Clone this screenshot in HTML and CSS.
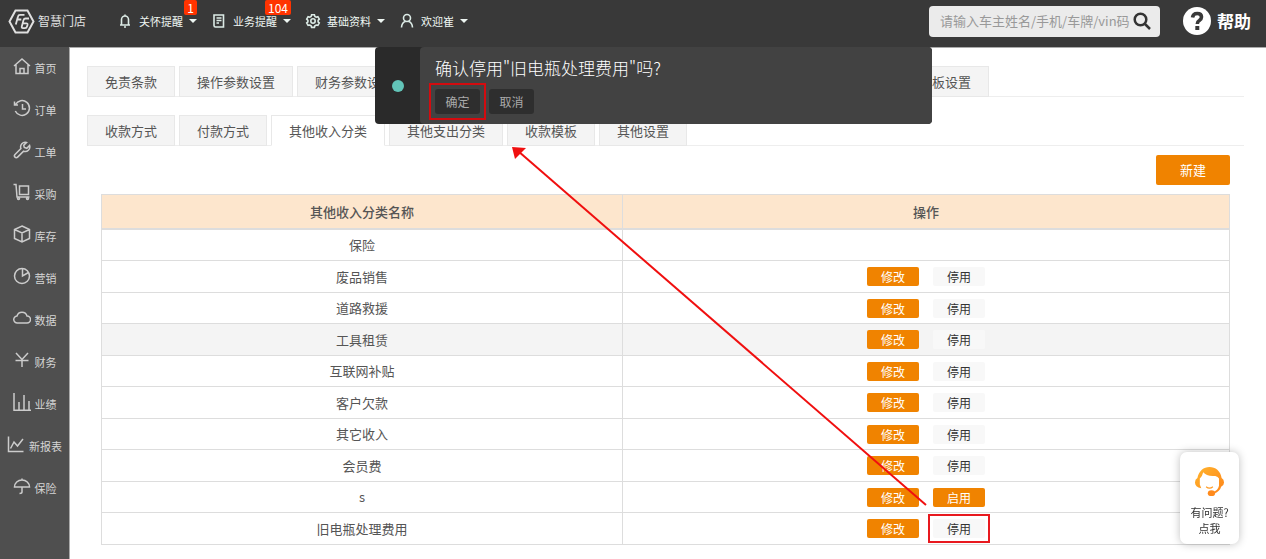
FILE: index.html
```html
<!DOCTYPE html>
<html lang="zh-CN">
<head>
<meta charset="utf-8">
<meta name="viewport" content="width=device-width, initial-scale=1">
<title>智慧门店</title>
<link rel="stylesheet" href="styles.css">
</head>
<body>
<div class="page">
  <header class="topbar">
    <a class="brand" href="#">
      <svg class="brand-mark" viewBox="0 0 27 25" aria-hidden="true"><path d="M7.500 1.500h12L25.500 12.500 19.500 23.500h-12L1.500 12.500z"/><path class="brand-letters" d="M7.800 15.500 10 7.500q.4-1.700 2-1.700h4.500M9.300 10.500h4M21 9.500h-3.500q-1.600 0-2 1.600l-1.700 6.300q-.4 1.700 1.200 1.700h2q1.600 0 2-1.600l.5-1.600q.4-1.600-1.200-1.600h-3.400"/></svg>
      <span>智慧门店</span>
    </a>
    <nav class="menus" aria-label="快捷菜单">
      <button class="menu" type="button">
        <svg class="menu-icon" viewBox="0 0 16 16" aria-hidden="true"><path d="M3 12h10M4.500 12V6.500a3.500 3.500 0 0 1 7 0V12M8 1.500V3M7 14h2"/></svg>
        <span>关怀提醒</span><i class="caret"></i><b class="badge">1</b>
      </button>
      <button class="menu" type="button">
        <svg class="menu-icon" viewBox="0 0 16 16" aria-hidden="true"><path d="M3 2h9.500v12H4.500Q3 14 3 12.500zM5.500 5h5M5.500 7.500h5M5.500 10h2.500M12.500 10v4"/></svg>
        <span>业务提醒</span><i class="caret"></i><b class="badge">104</b>
      </button>
      <button class="menu" type="button">
        <svg class="menu-icon" viewBox="0 0 16 16" aria-hidden="true"><path d="M6.600 1.800h2.800l.5 1.700 1.300.7 1.700-.5 1.400 2.400-1.200 1.300v1.400l1.200 1.200-1.400 2.400-1.700-.4-1.300.7-.5 1.700H6.600l-.5-1.700-1.300-.7-1.700.4L1.700 10l1.200-1.200V7.400L1.700 6.100l1.400-2.400 1.700.5 1.300-.7z"/><circle cx="8" cy="8" r="2.200"/></svg>
        <span>基础资料</span><i class="caret"></i>
      </button>
      <button class="menu" type="button">
        <svg class="menu-icon" viewBox="0 0 16 16" aria-hidden="true"><circle cx="8" cy="5" r="3.500"/><path d="M2.500 14.500c.2-3.500 1.800-5.500 4-6M13.500 14.500c-.2-3.500-1.800-5.500-4-6"/></svg>
        <span>欢迎崔</span><i class="caret"></i>
      </button>
    </nav>
    <form class="search" role="search">
      <input class="search-input" type="text" aria-label="搜索" placeholder="请输入车主姓名/手机/车牌/vin码">
      <button class="search-button" type="button" aria-label="搜索">
        <svg viewBox="0 0 18 18" aria-hidden="true"><circle cx="7.500" cy="7.500" r="5.800"/><path d="m12 12 5 5"/></svg>
      </button>
    </form>
    <a class="help" href="#">
      <svg viewBox="0 0 28 28" aria-hidden="true"><circle cx="14" cy="14" r="14" fill="#fff"/><path d="M9.500 10.500q.5-4 4.700-4 4.300 0 4.300 3.600 0 2-2.200 3.400-2 1.200-2 3.500" fill="none" stroke="#393939" stroke-width="3.600"/><path d="M12.300 19h4v4h-4z" fill="#393939"/></svg>
      <span>帮助</span>
    </a>
  </header>

  <div class="body">
    <nav class="sidebar" aria-label="主导航">
      <a class="side-link" href="#"><svg viewBox="0 0 18 18" aria-hidden="true"><path d="m1 9 8-7 8 7M3 7.500v9h12v-9M7 16.500v-5h4v5"/></svg><span>首页</span></a>
      <a class="side-link" href="#"><svg viewBox="0 0 18 18" aria-hidden="true"><path d="M2.500 5.500A7.400 7.400 0 1 1 2.300 12M1.500 2.500v3.500H5M9.500 5v5H13"/></svg><span>订单</span></a>
      <a class="side-link" href="#"><svg viewBox="0 0 18 18" aria-hidden="true"><path d="M13.500 1.500a4.600 4.600 0 0 0-5.600 6L2 13.500a1.800 1.800 0 0 0 2.600 2.600l6-5.900a4.600 4.600 0 0 0 6-5.700l-2.800 2.800-2.500-.8-.6-2.300z"/></svg><span>工单</span></a>
      <a class="side-link" href="#"><svg viewBox="0 0 18 18" aria-hidden="true"><path d="M.5 1.500H3L4 14h12.500M6.500 3h9v8.500h-9z"/><circle cx="5.500" cy="15.500" r="1"/><circle cx="14.500" cy="15.500" r="1"/></svg><span>采购</span></a>
      <a class="side-link" href="#"><svg viewBox="0 0 18 18" aria-hidden="true"><path d="m9 1 7.500 3.500v9L9 17l-7.500-3.500v-9zM1.500 4.500 9 8l7.500-3.500M9 8v9"/></svg><span>库存</span></a>
      <a class="side-link" href="#"><svg viewBox="0 0 18 18" aria-hidden="true"><circle cx="9" cy="9" r="7.500"/><path d="M9.500 1.500V9l6-3.500"/></svg><span>营销</span></a>
      <a class="side-link" href="#"><svg viewBox="0 0 18 18" aria-hidden="true"><path d="M4.500 14a3.500 3.500 0 0 1-.5-7 5.200 5.200 0 0 1 10 0 3.500 3.500 0 0 1 0 7z"/></svg><span>数据</span></a>
      <a class="side-link" href="#"><svg viewBox="0 0 18 18" aria-hidden="true"><path d="m3 2 6 6.500L15 2M2.500 9.500h13M9 8.500V16"/></svg><span>财务</span></a>
      <a class="side-link" href="#"><svg viewBox="0 0 18 18" aria-hidden="true"><path d="M1 0v17.200h17M6 17V9M11 17V2M16 17V8"/></svg><span>业绩</span></a>
      <a class="side-link" href="#"><svg viewBox="0 0 18 18" aria-hidden="true"><path d="M1.500 1.500v15h15M3.500 13.500 7 7l3.500 4 5.500-7"/></svg><span>新报表</span></a>
      <a class="side-link" href="#"><svg viewBox="0 0 18 18" aria-hidden="true"><path d="M1.500 10a7.500 7 0 0 1 15 0zM9 1.500V3M9 10v5q0 1.500-2.500 1.500"/></svg><span>保险</span></a>
    </nav>

    <main class="content">
      <nav class="tabs" aria-label="设置">
        <a class="tab" href="#">免责条款</a>
        <a class="tab" href="#">操作参数设置</a>
        <a class="tab" href="#">财务参数设置</a>
        <a class="tab tab-far" href="#">打印模板设置</a>
      </nav>
      <nav class="tabs" aria-label="财务参数">
        <a class="tab" href="#">收款方式</a>
        <a class="tab" href="#">付款方式</a>
        <a class="tab tab-active" href="#" aria-current="page">其他收入分类</a>
        <a class="tab" href="#">其他支出分类</a>
        <a class="tab" href="#">收款模板</a>
        <a class="tab" href="#">其他设置</a>
      </nav>
      <section class="panel">
        <button class="create" type="button">新建</button>
        <table class="grid">
          <thead><tr><th class="col-name" scope="col">其他收入分类名称</th><th scope="col">操作</th></tr></thead>
          <tbody>
            <tr><td>保险</td><td></td></tr>
            <tr><td>废品销售</td><td><div class="actions"><button class="act act-main" type="button">修改</button><button class="act" type="button">停用</button></div></td></tr>
            <tr><td>道路救援</td><td><div class="actions"><button class="act act-main" type="button">修改</button><button class="act" type="button">停用</button></div></td></tr>
            <tr class="row-hover"><td>工具租赁</td><td><div class="actions"><button class="act act-main" type="button">修改</button><button class="act" type="button">停用</button></div></td></tr>
            <tr><td>互联网补贴</td><td><div class="actions"><button class="act act-main" type="button">修改</button><button class="act" type="button">停用</button></div></td></tr>
            <tr><td>客户欠款</td><td><div class="actions"><button class="act act-main" type="button">修改</button><button class="act" type="button">停用</button></div></td></tr>
            <tr><td>其它收入</td><td><div class="actions"><button class="act act-main" type="button">修改</button><button class="act" type="button">停用</button></div></td></tr>
            <tr><td>会员费</td><td><div class="actions"><button class="act act-main" type="button">修改</button><button class="act" type="button">停用</button></div></td></tr>
            <tr><td>s</td><td><div class="actions"><button class="act act-main" type="button">修改</button><button class="act act-main" type="button">启用</button></div></td></tr>
            <tr><td>旧电瓶处理费用</td><td><div class="actions"><button class="act act-main" type="button">修改</button><button class="act act-marked" type="button">停用</button></div></td></tr>
          </tbody>
        </table>
      </section>
    </main>
  </div>

  <div class="confirm" role="dialog" aria-labelledby="confirm-title">
    <div class="confirm-side"><i class="dot"></i></div>
    <div class="confirm-main">
      <p class="confirm-title" id="confirm-title">确认停用"旧电瓶处理费用"吗?</p>
      <div class="confirm-actions">
        <button class="choice choice-marked" type="button">确定</button>
        <button class="choice" type="button">取消</button>
      </div>
    </div>
  </div>

  <svg class="pointer" width="420" height="364" viewBox="0 0 420 364" aria-hidden="true"><path d="M415 359 7 5" fill="none" stroke="#f00f0f" stroke-width="2"/><path d="m1 1 14 1L4 13z" fill="#f00f0f"/></svg>

  <button class="support" type="button">
    <svg viewBox="0 0 32 32" aria-hidden="true"><defs><linearGradient id="warm" x1="0" y1="0" x2="1" y2="1"><stop offset="0" stop-color="#ffb52e"/><stop offset="1" stop-color="#ff8418"/></linearGradient></defs><path d="M3.500 12.500C5 5 10 1 16 1s11.500 4 12.500 11.500Q31 14 31 17t-3 4.500q-1.200 5-7.500 7l-.8-1.300q5-2 6.100-6.700V13q-1-2-3.800-2.800Q13 11 9.500 6.500q-1 4.500-3.500 6.500v6l1.500 4Q1 21.500 1 17q0-3 2.500-4.500z" fill="url(#warm)"/><ellipse cx="18" cy="28" rx="3.800" ry="3" fill="#ff8a1c"/><path d="M12.500 21.500q3.500 2.800 7 0" fill="none" stroke="#ff9a22" stroke-width="1.200"/></svg>
    <span>有问题?</span><span>点我</span>
  </button>
</div>
</body>
</html>
```
FILE: styles.css
```css
* { box-sizing: border-box; }

body {
  margin: 0;
  background: #fff;
  color: #555;
  font-family: "Noto Sans CJK SC", "Noto Sans", sans-serif;
  font-size: 13px;
  line-height: 18px;
}

button, input { font: inherit; color: inherit; border: 0; padding: 0; background: none; }
a { color: inherit; text-decoration: none; }
p { margin: 0; }
svg { display: block; flex: none; }

.page { position: relative; display: flex; flex-direction: column; min-height: 100vh; }

/* Top bar */
.topbar {
  display: flex;
  align-items: center;
  height: 47px;
  padding: 0 15px 5px 8px;
  background: #393939;
  color: #fff;
}
.brand { display: flex; align-items: center; gap: 3px; font-size: 12px; color: #e0e0e0; }
.brand-mark { width: 27px; height: 25px; fill: none; stroke: #e0e0e0; stroke-width: 2; }
.brand-letters { stroke-width: 1.800; }
.menus { display: flex; gap: 14px; margin-left: 31px; }
.menu { position: relative; display: flex; align-items: center; gap: 6px; font-size: 11px; color: #eef6f2; white-space: nowrap; }
.menu-icon { width: 16px; height: 16px; fill: none; stroke: #dcebe6; stroke-width: 1.600; }
.caret { border: 4px solid transparent; border-top-color: #eef6f2; border-bottom: 0; }
.badge {
  position: absolute;
  right: 0;
  bottom: 15px;
  padding: 0 3px;
  min-width: 13px;
  border-radius: 2px;
  background: #ff3300;
  color: #fff;
  font-size: 12px;
  font-weight: 400;
  line-height: 15px;
}
.search { display: flex; align-items: center; width: 231px; height: 31px; margin-left: auto; padding: 0 9px 0 11px; border-radius: 4px; background: #ebebeb; }
.search-input { flex: 1; min-width: 0; outline: 0; color: #555; }
.search-input::placeholder { color: #999; opacity: 1; }
.search-button svg { width: 18px; height: 18px; fill: none; stroke: #333; stroke-width: 2.500; }
.help { display: flex; align-items: center; gap: 6px; margin-left: 23px; font-size: 17px; font-weight: 700; }
.help svg { width: 28px; height: 28px; }

/* Side navigation */
.body { display: flex; flex: 1; }
.sidebar { flex: none; width: 69px; background: #4f4f4f; color: #d5d5d5; }
.side-link { display: flex; align-items: center; justify-content: center; gap: 4px; height: 42px; font-size: 11px; white-space: nowrap; }
.side-link svg { width: 18px; height: 22px; padding-bottom: 4px; fill: none; stroke: #ccc; stroke-width: 1.500; }

/* Content */
.content { flex: 1; min-width: 0; padding: 18px 22px 14px 17px; border: solid #aaa; border-width: 1px 0 0 1px; }
.tabs { display: flex; gap: 4px; margin-bottom: 18px; border-bottom: 1px solid #eee; }
.tab { height: 31px; margin-bottom: -1px; padding: 0 17px; border: 1px solid #e8e8e8; background: #f4f4f4; line-height: 29px; white-space: nowrap; }
.tab-active { border-bottom-color: #fff; background: #fff; }
.tab-far { margin-left: 460px; }
.panel { display: flex; flex-direction: column; gap: 9px; margin-top: -9px; padding: 0 14px; }
.create { align-self: flex-end; width: 74px; height: 30px; border-radius: 2px; background: #f08300; color: #fff; }

.grid { width: 100%; border: solid #ddd; border-width: 1px 0 0 1px; border-spacing: 0; table-layout: fixed; text-align: center; }
.grid th, .grid td { padding: 0; border: solid #ddd; border-width: 0 1px 1px 0; }
.grid th { height: 35px; border-bottom-width: 2px; background: #fde6cd; font-weight: 500; }
.grid td { height: 31px; }
.grid tr:nth-child(even) td { height: 32px; }
.grid .col-name { width: 521px; }
.row-hover { background: #f4f4f4; }
.actions { display: flex; justify-content: center; gap: 14px; }
.act { position: relative; width: 52px; height: 19px; border-radius: 2px; background: #f8f8f8; color: #333; font-size: 12px; line-height: 19px; }
.act-main { background: #f08300; color: #fff; }
.act-marked::after { content: ""; position: absolute; inset: -5px; border: 2px solid #e8191f; }

/* Confirmation */
.confirm { position: absolute; top: 47px; left: 375px; display: flex; width: 44%; border-radius: 4px; background: #2a2a2a; overflow: hidden; }
.confirm-side { display: flex; flex: none; align-items: center; justify-content: center; width: 45px; }
.dot { width: 12px; height: 12px; border-radius: 50%; background: #62c4b8; }
.confirm-main { flex: 1; padding: 9px 15px 10px; border-radius: 4px; background: #424242; color: #fff; }
.confirm-title { font-family: "KaiTi", "Kaiti SC", "Noto Sans CJK SC", sans-serif; font-size: 17px; font-weight: 300; line-height: 24px; }
.confirm-actions { display: flex; gap: 9px; margin-top: 9px; }
.choice { position: relative; width: 45px; height: 25px; border-radius: 3px; background: #2e2e2e; color: #aaa; font-size: 12px; }
.choice-marked::after { content: ""; position: absolute; inset: -6px; border: 2px solid #d30b0f; }

.pointer { position: absolute; top: 146px; left: 511px; pointer-events: none; }

/* Support entry */
.support {
  position: fixed;
  right: 27px;
  bottom: 15px;
  display: flex;
  flex-direction: column;
  align-items: center;
  width: 59px;
  padding: 14px 0 8px;
  border-radius: 7px;
  background: #fff;
  box-shadow: 0 0 8px rgba(0, 0, 0, 0.25);
  color: #333;
  font-size: 11px;
  line-height: 16px;
}
.support svg { width: 31px; height: 31px; margin-bottom: 7px; }
```
